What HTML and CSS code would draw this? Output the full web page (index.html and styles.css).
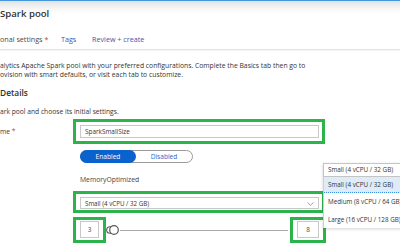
FILE: index.html
```html
<!DOCTYPE html>
<html>
<head>
<meta charset="utf-8">
<link rel="stylesheet" href="styles.css">
</head>
<body>
<div class="page">
  <header class="header">
    <h1 class="title">Spark pool</h1>
    <nav class="tabs">
      <span class="tab tab-first">onal settings <span class="req">*</span></span>
      <span class="tab tab-link">Tags</span>
      <span class="tab tab-link">Review + create</span>
    </nav>
  </header>
  <main class="content">
    <p class="desc">alytics Apache Spark pool with your preferred configurations. Complete the Basics tab then go to<br>ovision with smart defaults, or visit each tab to customize.</p>
    <h2 class="section">Details</h2>
    <p class="sub">ark pool and choose its initial settings.</p>
    <div class="form">
      <div class="row row-name">
        <label class="label">me <span class="req">*</span></label>
        <div class="hl hl-name"><div class="input">SparkSmallSize</div></div>
      </div>
      <div class="row row-toggle">
        <span></span>
        <div class="toggle"><span class="opt on">Enabled</span><span class="opt off">Disabled</span></div>
      </div>
      <div class="row row-family">
        <span></span>
        <span class="family">MemoryOptimized</span>
      </div>
      <div class="row row-size">
        <span></span>
        <div class="hl hl-size">
          <div class="select"><span>Small (4 vCPU / 32 GB)</span>
            <svg class="chev" width="7" height="4" viewBox="0 0 7 4"><path d="M0.5 0.5 L3.5 3.3 L6.5 0.5" fill="none" stroke="#8a8a8a" stroke-width="0.8"/></svg>
          </div>
        </div>
      </div>
      <div class="row row-nodes">
        <span></span>
        <div class="nodes">
          <div class="hl hl-num hl-min"><div class="num num-min">3</div></div>
          <div class="slider">
            <svg class="thumb" width="14" height="12" viewBox="0 0 14 12"><circle cx="4" cy="6" r="3.3" fill="#fff" stroke="#555" stroke-width="1.1"/><circle cx="8" cy="6" r="4.3" fill="#fff" stroke="#555" stroke-width="1.2"/></svg>
            <div class="track"></div>
          </div>
          <div class="hl hl-num hl-max"><div class="num num-max">8</div></div>
        </div>
      </div>
    </div>
  </main>
  <div class="dropdown">
    <div class="dd-field">Small (4 vCPU / 32 GB)</div>
    <ul class="dd-list">
      <li class="dd-item selected">Small (4 vCPU / 32 GB)</li>
      <li class="dd-item">Medium (8 vCPU / 64 GB)</li>
      <li class="dd-item">Large (16 vCPU / 128 GB)</li>
    </ul>
  </div>
</div>
</body>
</html>
```

FILE: styles.css
```css
* { box-sizing: border-box; }
html, body { margin: 0; padding: 0; }
body {
  width: 400px;
  height: 250px;
  overflow: hidden;
  background: #fff;
  font-family: "Open Sans", "Noto Sans", sans-serif;
  color: #323130;
}
.page {
  position: relative;
  width: 400px;
  height: 250px;
  overflow: hidden;
}
.header {
  height: 50px;
  border-top: 1px solid #4597dc;
  border-bottom: 1px solid #e3e3e3;
  background: linear-gradient(#e2e2e2 0, #f6f6f6 7px, #fff 13px);
  box-shadow: 0 1px 1px rgba(0,0,0,0.04);
}
.title {
  margin: 0;
  padding-top: 6px;
  font-size: 9.6px;
  line-height: 13px;
  font-weight: 600;
  color: #323130;
}
.tabs {
  display: flex;
  margin-top: 14px;
  font-size: 7.2px;
  line-height: 10px;
}
.tab-first { color: #4a4a4a; width: 61px; }
.tab-link { color: #3d58b0; }
.tab-link + .tab-link { margin-left: 16px; }
.tabs .tab:nth-child(2) { width: 15px; }
.req { color: #d13438; }
.content { padding-top: 11px; }
.desc {
  margin: 0;
  font-size: 6.8px;
  line-height: 9px;
  color: #333;
  white-space: nowrap;
}
.section {
  margin: 8px 0 0 0;
  font-size: 8.4px;
  line-height: 12px;
  font-weight: 600;
  color: #323130;
}
.sub {
  margin: 8px 0 0 0;
  font-size: 6.7px;
  line-height: 10px;
  color: #333;
}
.form { margin-top: 2px; }
.row {
  display: grid;
  grid-template-columns: 73px 1fr;
  align-items: center;
}
.label {
  font-size: 6.7px;
  color: #333;
}
.hl {
  border: 3px solid #2db34c;
}
.hl-name {
  width: 252px;
  padding: 3px 3px 3px 4px;
}
.input {
  height: 13px;
  border: 1px solid #c8c8c8;
  font-size: 6.4px;
  line-height: 11px;
  padding-left: 4px;
  color: #333;
}
.row-toggle { margin-top: 6px; }
.toggle {
  margin-left: 7px;
  width: 113px;
  height: 13px;
  border: 1px solid #9a9a9a;
  border-radius: 7px;
  display: flex;
  font-size: 6.6px;
  line-height: 11px;
}
.opt {
  flex: 1;
  text-align: center;
}
.opt.on {
  flex: 0 0 56px;
  margin: -1px 0 -1px -1px;
  line-height: 13px;
  background: #0a62cc;
  color: #fff;
  border-radius: 7px;
}
.opt.off { color: #2c66c8; }
.row-family { margin-top: 12px; }
.family {
  margin-left: 7px;
  font-size: 6.8px;
  line-height: 10px;
  color: #444;
}
.row-size { margin-top: 6px; }
.hl-size {
  width: 252px;
  padding: 3px 3px 1px 4px;
}
.select {
  height: 12px;
  border: 1px solid #c8c8c8;
  display: flex;
  align-items: center;
  justify-content: space-between;
  padding: 0 4px 0 4px;
  font-size: 6.2px;
  color: #333;
}
.chev { display: block; margin-top: 1px; }
.row-nodes { margin-top: 4px; }
.nodes {
  display: flex;
  align-items: center;
}
.hl-num { padding: 1px 4px 2px 4px; }
.num {
  height: 17px;
  border: 1px solid #c8c8c8;
  font-size: 6.4px;
  line-height: 15px;
  text-align: center;
  color: #444;
}
.num-min { width: 19px; }
.num-max { width: 22px; }
.slider {
  width: 184px;
  display: flex;
  align-items: center;
}
.thumb { display: block; flex: 0 0 auto; }
.track {
  flex: 1;
  height: 1px;
  background: #a8a8a8;
  margin-right: 2px;
}
.dropdown {
  position: absolute;
  left: 323px;
  top: 163px;
  width: 92px;
  background: #fff;
  box-shadow: 0 1px 3px rgba(0,0,0,0.18);
  font-size: 6.3px;
  color: #333;
}
.dd-field {
  height: 14px;
  border: 1px solid #c4c4c4;
  line-height: 12px;
  padding-left: 4px;
}
.dd-list {
  list-style: none;
  margin: 0;
  padding: 0;
  border-left: 1px solid #d0d0d0;
}
.dd-item {
  height: 17.5px;
  line-height: 17.5px;
  padding-left: 4px;
  white-space: nowrap;
}
.dd-item.selected {
  height: 16px;
  line-height: 16px;
  background: #deecf9;
  border-bottom: 1px dotted #3a8ee6;
}
```
